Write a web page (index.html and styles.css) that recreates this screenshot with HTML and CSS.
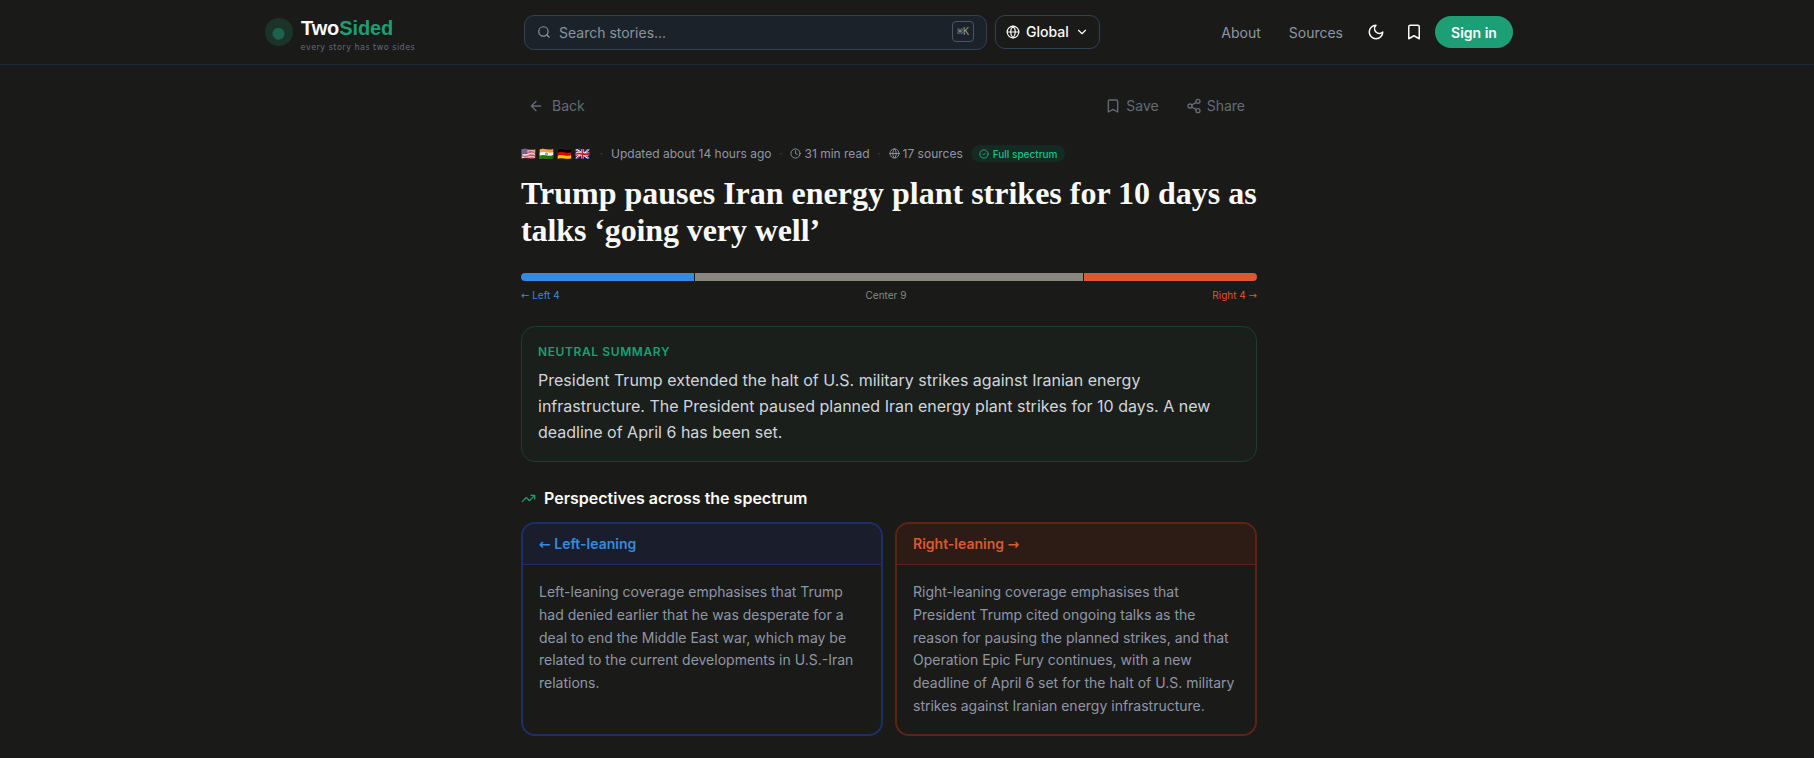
FILE: index.html
```html
<!DOCTYPE html>
<html lang="en">
<head>
<meta charset="utf-8">
<title>TwoSided</title>
<link rel="stylesheet" href="styles.css">
</head>
<body>
<header class="site-header">
  <div class="header-inner">
    <a class="brand">
      <svg class="brand-mark" width="28" height="28" viewBox="0 0 28 28"><circle cx="14" cy="14" r="14" fill="#1d9e75" fill-opacity=".2"/><circle cx="13.500" cy="15.800" r="6" fill="#1d9e75" fill-opacity=".45"/></svg>
      <span class="brand-text"><span class="brand-name">Two<b class="accent">Sided</b></span><span class="tagline">every story has two sides</span></span>
    </a>
    <div class="search-group">
      <div class="search">
        <svg class="icon" width="14" height="14" viewBox="0 0 24 24"><circle cx="11" cy="11" r="8"/><path d="m21 21-4.300-4.300"/></svg>
        <span class="placeholder">Search stories...</span>
        <kbd class="kbd">⌘K</kbd>
      </div>
      <button class="region">
        <svg class="icon" width="14" height="14" viewBox="0 0 24 24"><circle cx="12" cy="12" r="10"/><path d="M12 2a14.500 14.500 0 0 0 0 20 14.500 14.500 0 0 0 0-20M2 12h20"/></svg>
        <span>Global</span>
        <svg class="icon" width="14" height="14" viewBox="0 0 24 24"><path d="m6 9 6 6 6-6"/></svg>
      </button>
    </div>
    <nav class="nav">
      <a class="nav-link">About</a>
      <a class="nav-link">Sources</a>
      <svg class="icon moon" width="18" height="18" viewBox="0 0 24 24"><path d="M12 3a6 6 0 0 0 9 9 9 9 0 1 1-9-9Z"/></svg>
      <svg class="icon mark" width="18" height="18" viewBox="0 0 24 24"><path d="m19 21-7-4-7 4V5a2 2 0 0 1 2-2h10a2 2 0 0 1 2 2v16z"/></svg>
      <button class="sign-in">Sign in</button>
    </nav>
  </div>
</header>
<main class="article">
  <div class="toolbar">
    <a class="tool"><svg class="icon" width="16" height="16" viewBox="0 0 24 24"><path d="m12 19-7-7 7-7M19 12H5"/></svg>Back</a>
    <div class="tool-group">
      <a class="tool save"><svg class="icon" width="16" height="16" viewBox="0 0 24 24"><path d="m19 21-7-4-7 4V5a2 2 0 0 1 2-2h10a2 2 0 0 1 2 2v16z"/></svg>Save</a>
      <a class="tool share"><svg class="icon" width="16" height="16" viewBox="0 0 24 24"><circle cx="18" cy="5" r="3"/><circle cx="6" cy="12" r="3"/><circle cx="18" cy="19" r="3"/><path d="m8.590 13.510 6.830 3.980M15.410 6.510l-6.820 3.980"/></svg>Share</a>
    </div>
  </div>
  <div class="meta">
    <span class="flags"><span>🇺🇸</span><span>🇮🇳</span><span>🇩🇪</span><span>🇬🇧</span></span>
    <span class="dot">·</span>
    <span>Updated about 14 hours ago</span>
    <span class="dot">·</span>
    <span class="meta-item"><svg class="icon" width="11" height="11" viewBox="0 0 24 24"><circle cx="12" cy="12" r="10"/><path d="M12 6v6l4 2"/></svg>31 min read</span>
    <span class="dot">·</span>
    <span class="meta-item"><svg class="icon" width="11" height="11" viewBox="0 0 24 24"><circle cx="12" cy="12" r="10"/><path d="M12 2a14.500 14.500 0 0 0 0 20 14.500 14.500 0 0 0 0-20M2 12h20"/></svg>17 sources</span>
    <span class="badge"><svg class="icon" width="10" height="10" viewBox="0 0 24 24"><circle cx="12" cy="12" r="10"/><path d="m9 12 2 2 4-4"/></svg>Full spectrum</span>
  </div>
  <h1 class="headline"><span class="headline-first">Trump pauses Iran energy plant strikes for 10 days as</span> <span class="headline-second">talks ‘going very well’</span></h1>
  <div class="spectrum"><i class="seg left"></i><i class="seg center"></i><i class="seg right"></i></div>
  <div class="labels"><span class="blue"><span class="arrow">←</span> Left 4</span><span class="gray">Center 9</span><span class="orange">Right 4 <span class="arrow">→</span></span></div>
  <section class="summary">
    <h2 class="summary-title">NEUTRAL SUMMARY</h2>
    <p class="summary-text">President Trump extended the halt of U.S. military strikes against Iranian energy infrastructure. The President paused planned Iran energy plant strikes for 10 days. A new deadline of April 6 has been set.</p>
  </section>
  <h2 class="section-title"><svg class="icon" width="15" height="15" viewBox="0 0 24 24"><path d="m22 7-8.500 8.500-5-5L2 17M16 7h6v6"/></svg>Perspectives across the spectrum</h2>
  <div class="cards">
    <section class="card card-left">
      <h3 class="card-title"><span class="arrow">←</span> Left-leaning</h3>
      <p class="card-text">Left-leaning coverage emphasises that Trump had denied earlier that he was desperate for a deal to end the Middle East war, which may be related to the current developments in U.S.-Iran relations.</p>
    </section>
    <section class="card card-right">
      <h3 class="card-title">Right-leaning <span class="arrow">→</span></h3>
      <p class="card-text">Right-leaning coverage emphasises that President Trump cited ongoing talks as the reason for pausing the planned strikes, and that Operation Epic Fury continues, with a new deadline of April 6 set for the halt of U.S. military strikes against Iranian energy infrastructure.</p>
    </section>
  </div>
</main>
</body>
</html>
```
FILE: styles.css
```css
* { box-sizing: border-box; }
html { background: #1a1a18; }
body { margin: 0; height: 758px; overflow: hidden; font-family: Inter, sans-serif; color: #fafaf9; }
h1, h2, h3, p { margin: 0; }
button { font: inherit; }
.icon { fill: none; stroke: currentColor; stroke-width: 2; stroke-linecap: round; stroke-linejoin: round; flex: none; }
.arrow { font-family: "DejaVu Sans", sans-serif; line-height: 1; }

.site-header { height: 65px; border-bottom: 1px solid #1e293b; }
.header-inner { display: grid; grid-template-columns: 259px 576px 1fr; width: 1248px; height: 64px; margin-left: 265px; align-items: center; }
.brand { display: flex; align-items: center; gap: 8px; }
.brand-text { display: flex; flex-direction: column; padding-top: 7px; }
.brand-name { font: 700 20px/21px "Liberation Sans", sans-serif; letter-spacing: -0.1px; }
.accent { color: #1d9e75; }
.tagline { font: 8px/12px "DejaVu Sans", sans-serif; letter-spacing: 0.5px; color: #64697a; padding-top: 3px; margin-left: -0.5px; }
.search-group { display: flex; align-items: flex-start; gap: 8px; }
.search { display: flex; align-items: center; width: 463px; height: 35px; padding: 0 12px; border: 1px solid #334155; border-radius: 10px; background: #1c2229; color: #8b93a1; font-size: 14px; }
.placeholder { flex: 1; padding-left: 8px; }
.kbd { display: flex; align-items: center; justify-content: center; width: 22px; height: 21px; margin-top: -1px; border: 1px solid #4b5563; border-radius: 4px; font: 10px "DejaVu Sans Mono", monospace; }
.region { display: flex; align-items: center; gap: 6px; width: 105px; height: 34px; padding: 0 10px; border: 1px solid #334155; border-radius: 10px; background: none; color: #fafaf9; font-size: 14px; font-weight: 500; }
.nav { display: flex; align-items: center; justify-content: flex-end; font-size: 14px; color: #9096a5; }
.nav-link + .nav-link { margin-left: 28px; }
.moon { margin-left: 24px; color: #fafaf9; }
.mark { margin: 0 12px 0 20px; color: #fafaf9; }
.sign-in { width: 78px; height: 32px; padding: 0; border: 0; border-radius: 16px; background: #1d9e75; color: #fff; font-size: 14px; font-weight: 600; }

.article { width: 736px; margin-left: 521px; }
.toolbar { display: flex; justify-content: space-between; padding: 31px 12px 0 7px; color: #646a7a; font-size: 14px; line-height: 20px; }
.tool { display: flex; align-items: center; gap: 8px; }
.tool-group { display: flex; gap: 27px; }
.save, .share { gap: 5px; }

.meta { display: flex; align-items: center; height: 17px; margin-top: 29px; font-size: 12px; color: #9096a5; white-space: nowrap; }
.flags { display: flex; gap: 3px; width: 71px; }
.dot { width: 19px; text-align: center; color: #374151; }
.meta-item { display: flex; align-items: center; gap: 3px; }
.badge { display: flex; align-items: center; gap: 4px; height: 17px; margin-left: 8px; padding: 0 8px; border-radius: 9px; background: #152a22; color: #10c584; font-size: 10px; font-weight: 500; }

.headline { margin-top: 13px; font: 700 32px/37px "Liberation Serif", serif; white-space: nowrap; }
.headline-first, .headline-second { display: block; }
.headline-second { letter-spacing: -0.1px; }
.spectrum { display: flex; gap: 1px; height: 8px; margin-top: 24px; border-radius: 4px; overflow: hidden; }
.seg { flex: 4; }
.left { background: #378add; }
.center { flex: 9; background: #888780; }
.right { background: #d85a30; }
.labels { display: flex; justify-content: space-between; height: 14px; margin-top: 7px; font-size: 10px; line-height: 14px; }
.blue { color: #378add; }
.gray { color: #888780; }
.orange { color: #d85a30; }

.summary { height: 136px; margin-top: 24px; padding: 16px; border: 1px solid #193f32; border-radius: 14px; background: #1a1f1b; }
.summary-title { font-size: 12px; font-weight: 600; line-height: 18px; letter-spacing: 0.6px; color: #1d9e75; }
.summary-text { margin-top: 6px; font-size: 16px; line-height: 26px; color: #d1d5db; }
.section-title { display: flex; align-items: center; gap: 8px; margin-top: 24px; font-size: 16px; line-height: 24px; font-weight: 600; }
.section-title .icon { color: #1d9e75; }

.cards { display: grid; grid-template-columns: 1fr 1fr; gap: 12px; margin-top: 12px; }
.card { height: 214px; border: 2px solid; border-radius: 14px; overflow: hidden; }
.card-title { height: 41px; padding: 10px 16px; border-bottom: 1px solid; font-size: 14px; line-height: 20px; font-weight: 600; }
.card-text { padding: 16px; font-size: 14px; line-height: 22.750px; color: #9096a5; }
.card-left, .card-left .card-title { border-color: #1c2f68; }
.card-left .card-title { background: #1a1e2c; color: #378add; }
.card-right, .card-right .card-title { border-color: #5e2413; }
.card-right .card-title { background: #2d1b16; color: #d85a30; }
```
